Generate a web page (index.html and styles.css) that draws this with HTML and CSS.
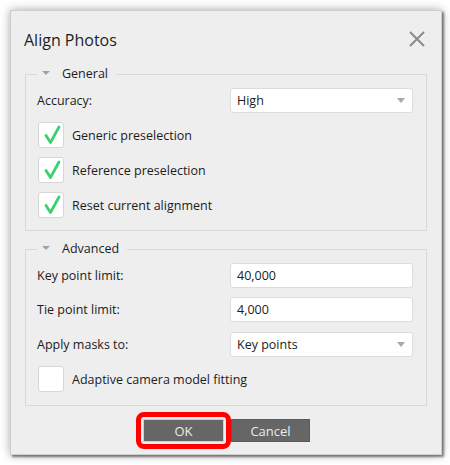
FILE: index.html
```html
<!DOCTYPE html>
<html>
<head>
<meta charset="utf-8">
<link rel="stylesheet" href="styles.css">
</head>
<body>
<div class="dialog">
  <div class="header">
    <div class="title">Align Photos</div>
    <svg class="close" width="18" height="18" viewBox="0 0 18 18"><path d="M2 2 L16 16 M16 2 L2 16" stroke="#8a8a8a" stroke-width="2" fill="none"/></svg>
  </div>

  <fieldset class="group general">
    <legend><span class="tri"></span>General</legend>
    <div class="row">
      <span class="label">Accuracy:</span>
      <div class="combo"><span>High</span><span class="arrow"></span></div>
    </div>
    <div class="check-row">
      <div class="box"><svg width="26" height="26" viewBox="0 0 26 26"><path d="M8 13.5 L12.5 20.5 L21 5" stroke="#3bd16f" stroke-width="2.8" fill="none" stroke-linecap="round" stroke-linejoin="round"/></svg></div>
      <span class="label">Generic preselection</span>
    </div>
    <div class="check-row">
      <div class="box"><svg width="26" height="26" viewBox="0 0 26 26"><path d="M8 13.5 L12.5 20.5 L21 5" stroke="#3bd16f" stroke-width="2.8" fill="none" stroke-linecap="round" stroke-linejoin="round"/></svg></div>
      <span class="label">Reference preselection</span>
    </div>
    <div class="check-row">
      <div class="box"><svg width="26" height="26" viewBox="0 0 26 26"><path d="M8 13.5 L12.5 20.5 L21 5" stroke="#3bd16f" stroke-width="2.8" fill="none" stroke-linecap="round" stroke-linejoin="round"/></svg></div>
      <span class="label">Reset current alignment</span>
    </div>
  </fieldset>

  <fieldset class="group advanced">
    <legend><span class="tri"></span>Advanced</legend>
    <div class="row">
      <span class="label">Key point limit:</span>
      <div class="field">40,000</div>
    </div>
    <div class="row">
      <span class="label">Tie point limit:</span>
      <div class="field">4,000</div>
    </div>
    <div class="row r3">
      <span class="label">Apply masks to:</span>
      <div class="combo"><span>Key points</span><span class="arrow"></span></div>
    </div>
    <div class="check-row">
      <div class="box"></div>
      <span class="label">Adaptive camera model fitting</span>
    </div>
  </fieldset>

  <div class="buttons">
    <div class="btn ok">OK</div>
    <div class="btn cancel">Cancel</div>
  </div>
</div>
</body>
</html>
```

FILE: styles.css
```css
html, body {
  margin: 0;
  padding: 0;
  background: #ffffff;
}
body {
  width: 450px;
  height: 465px;
  overflow: hidden;
  font-family: "Open Sans", "Noto Sans", sans-serif;
  font-size: 12.5px;
  color: #1c1c1c;
}
.dialog {
  margin: 10px 0 0 10px;
  width: 432px;
  height: 445px;
  box-sizing: border-box;
  background: #eeeeee;
  border: 1px solid #cfcfcf;
  box-shadow: 2px 2px 2px rgba(0,0,0,0.45), 0 0 9px rgba(0,0,0,0.35);
  display: flex;
  flex-direction: column;
}
.header {
  height: 56px;
  display: flex;
  align-items: center;
  justify-content: space-between;
  padding: 0 15px 0 13px;
}
.title {
  font-size: 16px;
  color: #1e1e1e;
  padding-top: 1px;
}
.close {
  display: block;
}
.group {
  margin: 0 14px;
  padding: 6px 13px 12px 11px;
  border: 1px solid #d9d9d9;
  display: flex;
  flex-direction: column;
  gap: 9px;
}
.general {
  padding-top: 7px;
}
.advanced {
  margin-top: 11px;
  padding-top: 7px;
  padding-bottom: 13px;
}
legend {
  padding: 0 8px 0 5px;
  line-height: 14px;
  height: 14px;
  display: flex;
  align-items: center;
  font-size: 12.5px;
  color: #1c1c1c;
}
.tri {
  width: 0;
  height: 0;
  border-left: 4px solid transparent;
  border-right: 4px solid transparent;
  border-top: 4px solid #a3a3a3;
  margin-right: 12px;
  margin-top: -2px;
}
.row {
  display: flex;
  align-items: center;
  justify-content: space-between;
  height: 25px;
}
.r3 {
  margin-top: 1px;
}
.combo, .field {
  width: 183px;
  height: 25px;
  box-sizing: border-box;
  background: #ffffff;
  border: 1px solid #dcdcdc;
  border-radius: 3px;
  padding: 0 6px;
  display: flex;
  align-items: center;
  justify-content: space-between;
}
.arrow {
  width: 0;
  height: 0;
  border-left: 4.5px solid transparent;
  border-right: 4.5px solid transparent;
  border-top: 5px solid #a8a8a8;
  margin-right: 1px;
}
.check-row {
  display: flex;
  align-items: center;
  height: 26px;
  padding-left: 1px;
}
.box {
  width: 26px;
  height: 26px;
  box-sizing: border-box;
  background: #ffffff;
  border: 1px solid #d6d6d6;
  border-radius: 3px;
  margin-right: 8px;
}
.box svg {
  display: block;
  margin: -1px;
}
.buttons {
  margin-top: 13px;
  display: flex;
  justify-content: center;
  gap: 7px;
  padding-left: 1px;
}
.btn {
  height: 23px;
  box-sizing: border-box;
  background: #666666;
  color: #ececec;
  font-size: 13px;
  display: flex;
  align-items: center;
  justify-content: center;
}
.ok {
  width: 81px;
  border: 1px solid #cfcfcf;
  outline: 5px solid #ff0000;
  outline-offset: 2px;
  border-radius: 1px;
}
.cancel {
  width: 79px;
  border: 1px solid #5a5a5a;
}
```
